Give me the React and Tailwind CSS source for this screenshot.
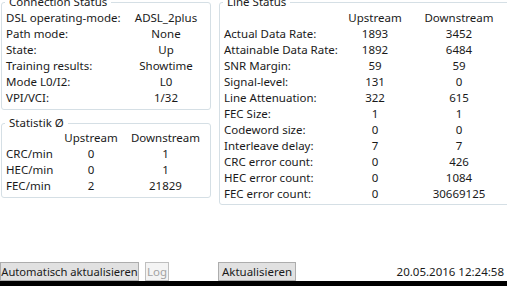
import React from 'react'

const font = { fontFamily: '"Noto Sans", "Open Sans", sans-serif' }

const connection = [
  ['DSL operating-mode:', 'ADSL_2plus'],
  ['Path mode:', 'None'],
  ['State:', 'Up'],
  ['Training results:', 'Showtime'],
  ['Mode L0/I2:', 'L0'],
  ['VPI/VCI:', '1/32'],
]

const stats = [
  ['CRC/min', '0', '1'],
  ['HEC/min', '0', '1'],
  ['FEC/min', '2', '21829'],
]

const line = [
  ['Actual Data Rate:', '1893', '3452'],
  ['Attainable Data Rate:', '1892', '6484'],
  ['SNR Margin:', '59', '59'],
  ['Signal-level:', '131', '0'],
  ['Line Attenuation:', '322', '615'],
  ['FEC Size:', '1', '1'],
  ['Codeword size:', '0', '0'],
  ['Interleave delay:', '7', '7'],
  ['CRC error count:', '0', '426'],
  ['HEC error count:', '0', '1084'],
  ['FEC error count:', '0', '30669125'],
]

// WPF-ish group box: legend sits on the top border
function GroupBox({ title, className = '', children }) {
  return (
    <fieldset className={`border border-[#d5dfe5] rounded-[3px] ${className}`}>
      <legend className="ml-[3px] px-[4px] leading-[16px]">{title}</legend>
      {children}
    </fieldset>
  )
}

export default function App() {
  return (
    <div
      className="w-[507px] h-[286px] bg-white text-[11.5px] leading-[16px] text-[#1a1a1a] whitespace-nowrap flex flex-col overflow-hidden"
      style={font}
    >
      <div className="flex mt-[-6px]">
        {/* Left column */}
        <div className="w-[210px] ml-[1px] shrink-0 flex flex-col">
          <GroupBox title="Connection Status" className="pb-[3px]">
            <div className="grid grid-cols-[116px_1fr] pl-[4px]">
              {connection.map(([label, value]) => (
                <React.Fragment key={label}>
                  <span>{label}</span>
                  <span className="text-center">{value}</span>
                </React.Fragment>
              ))}
            </div>
          </GroupBox>

          <GroupBox title="Statistik Ø" className="mt-[5px] pb-[3px]">
            <div className="grid grid-cols-[55px_60px_1fr] pl-[4px] -mt-[1px]">
              <span />
              <span className="text-center">Upstream</span>
              <span className="text-center">Downstream</span>
              {stats.map(([label, up, down]) => (
                <React.Fragment key={label}>
                  <span>{label}</span>
                  <span className="text-center">{up}</span>
                  <span className="text-center">{down}</span>
                </React.Fragment>
              ))}
            </div>
          </GroupBox>
        </div>

        {/* Right column */}
        <GroupBox title="Line Status" className="ml-[8px] w-[300px] shrink-0 pb-[2px] self-start">
          <div className="grid grid-cols-[116px_70px_98px] pl-[4px]">
            <span />
            <span className="text-center">Upstream</span>
            <span className="text-center">Downstream</span>
            {line.map(([label, up, down]) => (
              <React.Fragment key={label}>
                <span>{label}</span>
                <span className="text-center">{up}</span>
                <span className="text-center">{down}</span>
              </React.Fragment>
            ))}
          </div>
        </GroupBox>
      </div>

      <div className="flex-1" />

      {/* Bottom button bar */}
      <div className="flex items-end h-[19px]">
        <button className="w-[139px] h-[19px] border border-[#adadad] bg-[#e1e1e1] leading-[16px] text-[11.2px]">
          Automatisch aktualisieren
        </button>
        <button disabled className="ml-[6px] w-[24px] h-[19px] border border-[#bfbfbf] bg-[#f4f4f4] text-[#a3a3a3] leading-[16px]">
          Log
        </button>
        <button className="ml-[49px] w-[78px] h-[19px] border border-[#adadad] bg-[#e1e1e1] leading-[16px]">
          Aktualisieren
        </button>
        <span className="ml-auto mr-[3px] self-center">20.05.2016 12:24:58</span>
      </div>
      <div className="h-[5px] bg-black" />
    </div>
  )
}
